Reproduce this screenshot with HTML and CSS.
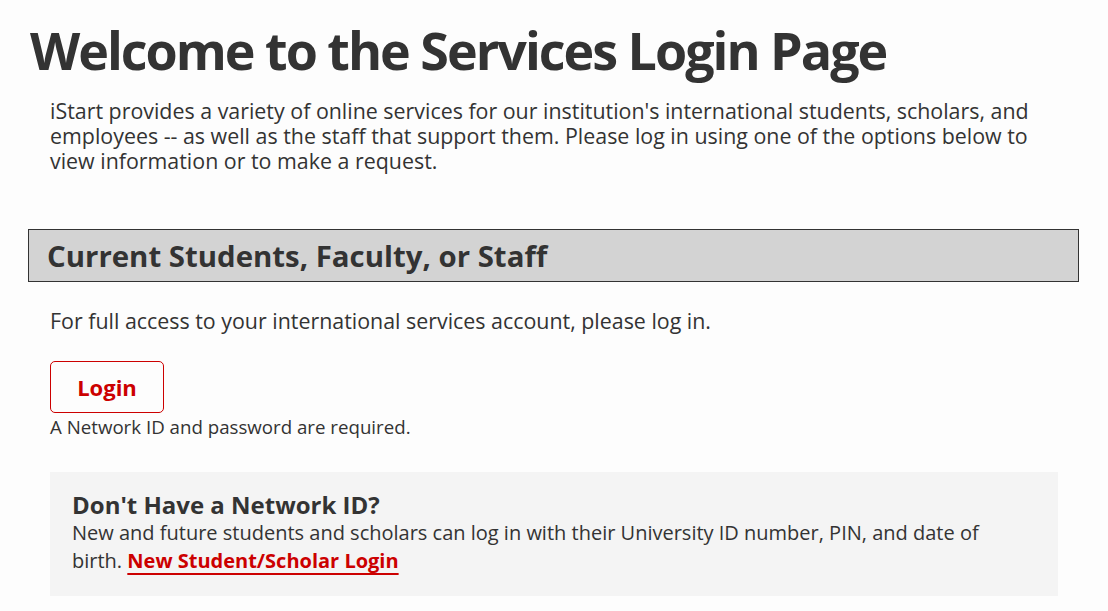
FILE: index.html
```html
<!DOCTYPE html>
<html lang="en">
<head>
    <meta charset="UTF-8">
    <meta name="viewport" content="width=device-width, initial-scale=1.0">
    <title>Services Login</title>
    <link rel="stylesheet" href="styles.css">
</head>
<body>
    <div class="page">
        <h1>Welcome to the Services Login Page</h1>
        <p class="intro">iStart provides a variety of online services for our institution's international students, scholars, and employees -- as well as the staff that support them. Please log in using one of the options below to view information or to make a request.</p>

        <div class="section-head">
            <h2>Current Students, Faculty, or Staff</h2>
        </div>
        <div class="section-body">
            <p class="lead">For full access to your international services account, please log in.</p>
            <a class="login-btn" href="#">Login</a>
            <p class="note">A Network ID and password are required.</p>

            <div class="alt-box">
                <h3>Don't Have a Network ID?</h3>
                <p>New and future students and scholars can log in with their University ID number, PIN, and date of birth. <a href="#">New Student/Scholar Login</a></p>
            </div>
        </div>
    </div>
</body>
</html>
```

FILE: styles.css
```css
body {
    font-family: "Open Sans", Arial, sans-serif;
    background-color: #fdfdfd;
    color: #333;
    margin: 0;
    padding: 0;
}
.page {
    padding: 20px 29px 0 28px;
}
h1 {
    font-size: 52px;
    font-weight: 700;
    letter-spacing: -2px;
    margin: 0 0 0 2px;
    line-height: 60px;
}
.intro {
    font-size: 21.4px;
    line-height: 25px;
    margin: 18px 0 0 22px;
    padding-right: 20px;
}
.section-head {
    margin-top: 56px;
    background-color: #d3d3d3;
    border: 1px solid #333;
    padding: 0 18px;
    height: 51px;
    display: flex;
    align-items: center;
}
.section-head h2 {
    font-size: 29.4px;
    margin: 0;
}
.section-body {
    padding: 0 21px 0 22px;
}
.lead {
    font-size: 21.4px;
    margin: 24px 0 0;
}
.login-btn {
    display: inline-flex;
    align-items: center;
    justify-content: center;
    margin-top: 26px;
    width: 114px;
    height: 52px;
    border: 1px solid #c00;
    border-radius: 5px;
    color: #c00;
    font-size: 22px;
    font-weight: 700;
    text-decoration: none;
    box-sizing: border-box;
}
.note {
    font-size: 18.7px;
    margin: 0;
    line-height: 28px;
}
.alt-box {
    margin-top: 31px;
    background-color: #f4f4f4;
    padding: 19px 50px 21px 22px;
}
.alt-box h3 {
    font-size: 24px;
    margin: 0;
    line-height: 28px;
}
.alt-box p {
    font-size: 20px;
    line-height: 28px;
    margin: 0;
}
.alt-box a {
    color: #c00;
    font-weight: 700;
    text-decoration-thickness: 2px;
    text-underline-offset: 5px;
}
```
